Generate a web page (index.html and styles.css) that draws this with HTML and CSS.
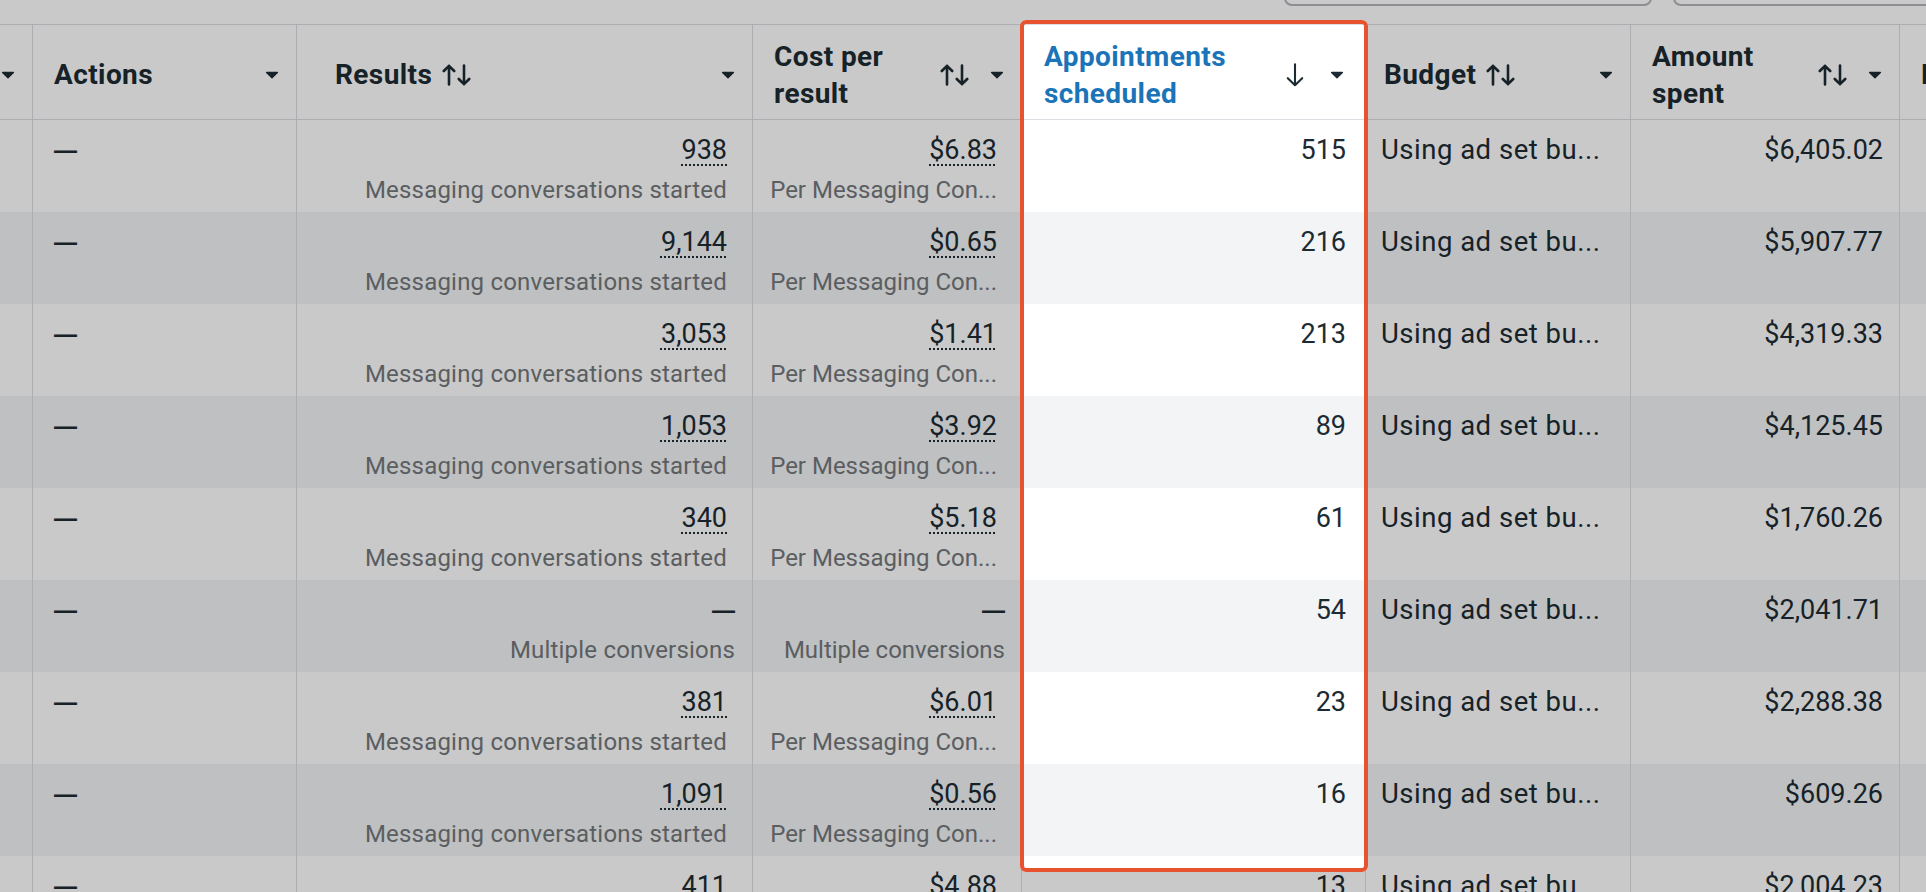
FILE: index.html
```html
<!DOCTYPE html>
<html lang="en">
<head>
<meta charset="utf-8">
<title>Ads table – Appointments scheduled</title>
<link rel="stylesheet" href="styles.css">
</head>
<body>
<div class="page">
  <div class="toolbar">
    <div class="btn btn-a"></div>
    <div class="btn btn-b"></div>
  </div>

  <div class="table">
    <div class="thead">
      <div class="th th-edge">
        <svg class="caret" width="14" height="8" viewBox="0 0 14 8"><path d="M1.6 0.8h10.8a.7.7 0 0 1 .5 1.2L7.5 7.3a.7.7 0 0 1-1 0L1.1 2a.7.7 0 0 1 .5-1.2z"/></svg>
      </div>
      <div class="th th-act">
        <div class="th-title">Actions</div>
        <svg class="caret" width="14" height="8" viewBox="0 0 14 8"><path d="M1.6 0.8h10.8a.7.7 0 0 1 .5 1.2L7.5 7.3a.7.7 0 0 1-1 0L1.1 2a.7.7 0 0 1 .5-1.2z"/></svg>
      </div>
      <div class="th th-res">
        <div class="th-title">Results</div>
        <svg class="sort" width="29" height="22" viewBox="0 0 29 22"><path d="M7 20.5V1.8M1.8 7 7 1.8 12.2 7M22 1.5v18.7M16.8 15 22 20.2 27.2 15"/></svg>
        <svg class="caret" width="14" height="8" viewBox="0 0 14 8"><path d="M1.6 0.8h10.8a.7.7 0 0 1 .5 1.2L7.5 7.3a.7.7 0 0 1-1 0L1.1 2a.7.7 0 0 1 .5-1.2z"/></svg>
      </div>
      <div class="th th-cost">
        <div class="th-title">Cost per result</div>
        <svg class="sort" width="29" height="22" viewBox="0 0 29 22"><path d="M7 20.5V1.8M1.8 7 7 1.8 12.2 7M22 1.5v18.7M16.8 15 22 20.2 27.2 15"/></svg>
        <svg class="caret" width="14" height="8" viewBox="0 0 14 8"><path d="M1.6 0.8h10.8a.7.7 0 0 1 .5 1.2L7.5 7.3a.7.7 0 0 1-1 0L1.1 2a.7.7 0 0 1 .5-1.2z"/></svg>
      </div>
      <div class="th th-appt">
        <div class="th-title th-title--active">Appointments scheduled</div>
        <svg class="sort sort--down" width="18" height="24" viewBox="0 0 18 24"><path d="M9 1.2v21M1.8 15.2 9 22.2l7.2-7"/></svg>
        <svg class="caret" width="14" height="8" viewBox="0 0 14 8"><path d="M1.6 0.8h10.8a.7.7 0 0 1 .5 1.2L7.5 7.3a.7.7 0 0 1-1 0L1.1 2a.7.7 0 0 1 .5-1.2z"/></svg>
      </div>
      <div class="th th-bud">
        <div class="th-title">Budget</div>
        <svg class="sort" width="29" height="22" viewBox="0 0 29 22"><path d="M7 20.5V1.8M1.8 7 7 1.8 12.2 7M22 1.5v18.7M16.8 15 22 20.2 27.2 15"/></svg>
        <svg class="caret" width="14" height="8" viewBox="0 0 14 8"><path d="M1.6 0.8h10.8a.7.7 0 0 1 .5 1.2L7.5 7.3a.7.7 0 0 1-1 0L1.1 2a.7.7 0 0 1 .5-1.2z"/></svg>
      </div>
      <div class="th th-amt">
        <div class="th-title">Amount spent</div>
        <svg class="sort" width="29" height="22" viewBox="0 0 29 22"><path d="M7 20.5V1.8M1.8 7 7 1.8 12.2 7M22 1.5v18.7M16.8 15 22 20.2 27.2 15"/></svg>
        <svg class="caret" width="14" height="8" viewBox="0 0 14 8"><path d="M1.6 0.8h10.8a.7.7 0 0 1 .5 1.2L7.5 7.3a.7.7 0 0 1-1 0L1.1 2a.7.7 0 0 1 .5-1.2z"/></svg>
      </div>
      <div class="th th-more">
        <div class="th-title">Ends</div>
      </div>
    </div>

    <div class="tr">
      <div class="td td-edge"></div>
      <div class="td td-act"><span class="num dash">—</span></div>
      <div class="td td-res"><span class="num link">938</span><span class="sub">Messaging conversations started</span></div>
      <div class="td td-cost"><span class="num link">$6.83</span><span class="sub">Per Messaging Con...</span></div>
      <div class="td td-appt"><span class="num">515</span></div>
      <div class="td td-bud"><span class="num text">Using ad set bu...</span></div>
      <div class="td td-amt"><span class="num">$6,405.02</span></div>
      <div class="td td-more"></div>
    </div>

    <div class="tr tr--alt">
      <div class="td td-edge"></div>
      <div class="td td-act"><span class="num dash">—</span></div>
      <div class="td td-res"><span class="num link">9,144</span><span class="sub">Messaging conversations started</span></div>
      <div class="td td-cost"><span class="num link">$0.65</span><span class="sub">Per Messaging Con...</span></div>
      <div class="td td-appt"><span class="num">216</span></div>
      <div class="td td-bud"><span class="num text">Using ad set bu...</span></div>
      <div class="td td-amt"><span class="num">$5,907.77</span></div>
      <div class="td td-more"></div>
    </div>

    <div class="tr">
      <div class="td td-edge"></div>
      <div class="td td-act"><span class="num dash">—</span></div>
      <div class="td td-res"><span class="num link">3,053</span><span class="sub">Messaging conversations started</span></div>
      <div class="td td-cost"><span class="num link">$1.41</span><span class="sub">Per Messaging Con...</span></div>
      <div class="td td-appt"><span class="num">213</span></div>
      <div class="td td-bud"><span class="num text">Using ad set bu...</span></div>
      <div class="td td-amt"><span class="num">$4,319.33</span></div>
      <div class="td td-more"></div>
    </div>

    <div class="tr tr--alt">
      <div class="td td-edge"></div>
      <div class="td td-act"><span class="num dash">—</span></div>
      <div class="td td-res"><span class="num link">1,053</span><span class="sub">Messaging conversations started</span></div>
      <div class="td td-cost"><span class="num link">$3.92</span><span class="sub">Per Messaging Con...</span></div>
      <div class="td td-appt"><span class="num">89</span></div>
      <div class="td td-bud"><span class="num text">Using ad set bu...</span></div>
      <div class="td td-amt"><span class="num">$4,125.45</span></div>
      <div class="td td-more"></div>
    </div>

    <div class="tr">
      <div class="td td-edge"></div>
      <div class="td td-act"><span class="num dash">—</span></div>
      <div class="td td-res"><span class="num link">340</span><span class="sub">Messaging conversations started</span></div>
      <div class="td td-cost"><span class="num link">$5.18</span><span class="sub">Per Messaging Con...</span></div>
      <div class="td td-appt"><span class="num">61</span></div>
      <div class="td td-bud"><span class="num text">Using ad set bu...</span></div>
      <div class="td td-amt"><span class="num">$1,760.26</span></div>
      <div class="td td-more"></div>
    </div>

    <div class="tr tr--alt">
      <div class="td td-edge"></div>
      <div class="td td-act"><span class="num dash">—</span></div>
      <div class="td td-res td--plain"><span class="num dash">—</span><span class="sub">Multiple conversions</span></div>
      <div class="td td-cost td--plain"><span class="num dash">—</span><span class="sub">Multiple conversions</span></div>
      <div class="td td-appt"><span class="num">54</span></div>
      <div class="td td-bud"><span class="num text">Using ad set bu...</span></div>
      <div class="td td-amt"><span class="num">$2,041.71</span></div>
      <div class="td td-more"></div>
    </div>

    <div class="tr">
      <div class="td td-edge"></div>
      <div class="td td-act"><span class="num dash">—</span></div>
      <div class="td td-res"><span class="num link">381</span><span class="sub">Messaging conversations started</span></div>
      <div class="td td-cost"><span class="num link">$6.01</span><span class="sub">Per Messaging Con...</span></div>
      <div class="td td-appt"><span class="num">23</span></div>
      <div class="td td-bud"><span class="num text">Using ad set bu...</span></div>
      <div class="td td-amt"><span class="num">$2,288.38</span></div>
      <div class="td td-more"></div>
    </div>

    <div class="tr tr--alt">
      <div class="td td-edge"></div>
      <div class="td td-act"><span class="num dash">—</span></div>
      <div class="td td-res"><span class="num link">1,091</span><span class="sub">Messaging conversations started</span></div>
      <div class="td td-cost"><span class="num link">$0.56</span><span class="sub">Per Messaging Con...</span></div>
      <div class="td td-appt"><span class="num">16</span></div>
      <div class="td td-bud"><span class="num text">Using ad set bu...</span></div>
      <div class="td td-amt"><span class="num">$609.26</span></div>
      <div class="td td-more"></div>
    </div>

    <div class="tr">
      <div class="td td-edge"></div>
      <div class="td td-act"><span class="num dash">—</span></div>
      <div class="td td-res"><span class="num link">411</span><span class="sub">Messaging conversations started</span></div>
      <div class="td td-cost"><span class="num link">$4.88</span><span class="sub">Per Messaging Con...</span></div>
      <div class="td td-appt"><span class="num">13</span></div>
      <div class="td td-bud"><span class="num text">Using ad set bu...</span></div>
      <div class="td td-amt"><span class="num">$2,004.23</span></div>
      <div class="td td-more"></div>
    </div>
  </div>

  <div class="spotlight" aria-hidden="true"></div>
</div>
</body>
</html>
```

FILE: styles.css
```css
html, body {
  margin: 0;
  padding: 0;
}

body {
  width: 1926px;
  height: 892px;
  overflow: hidden;
  background: #ffffff;
  font-family: Roboto, "Liberation Sans", sans-serif;
  color: #1c2b33;
}

.page {
  position: relative;
  width: 2100px;
}

/* top toolbar (only the bottoms of two buttons are visible) */
.toolbar {
  width: 1926px;
  height: 24px;
  box-sizing: border-box;
  padding-bottom: 18px;
  display: flex;
  justify-content: flex-end;
  align-items: flex-end;
  gap: 21px;
  overflow: hidden;
}

.btn {
  flex: none;
  height: 40px;
  box-sizing: border-box;
  border: 2px solid #b2b5ba;
  border-radius: 8px;
  background: #ffffff;
}

.btn-a { width: 368px; }
.btn-b { width: 273px; margin-right: -20px; }

/* table */
.table {
  --cols: 33px 264px 456px 269px 344px 265px 269px 200px;
  width: 2100px;
}

.thead,
.tr {
  display: grid;
  grid-template-columns: var(--cols);
}

.thead {
  height: 96px;
  box-sizing: border-box;
  border-top: 1px solid #dadde1;
  border-bottom: 1px solid #dadde1;
  background: #ffffff;
}

.tr {
  height: 92px;
  background: #ffffff;
}

.tr--alt {
  background: #f2f4f5;
}

.th,
.td {
  box-sizing: border-box;
  border-right: 1px solid #dadde1;
  min-width: 0;
}

/* header cells */
.th {
  display: flex;
  align-items: center;
  padding: 5px 17px 0 21px;
}

.th-title {
  flex: 0 1 auto;
  min-width: 0;
  font-size: 28px;
  line-height: 37px;
  font-weight: 700;
  letter-spacing: 0.4px;
  color: #1c2b33;
}

.th-title--active {
  color: #1b74b8;
}

.sort {
  flex: none;
  margin: 0 21px 0 8px;
  fill: none;
  stroke: #1c2b33;
  stroke-width: 2.6;
  stroke-linecap: round;
  stroke-linejoin: round;
}

.sort--down {
  margin-right: 26px;
  stroke-width: 2.1;
}

.caret {
  flex: none;
  margin-left: auto;
  fill: #1c2b33;
}

.th-edge { padding-left: 0; }
.th-res { padding-left: 38px; }
.th-res .sort { margin-left: 10px; }
.th-appt { padding-left: 22px; padding-right: 21px; }
.th-bud { padding-left: 18px; }
.th-bud .sort { margin-left: 10px; }
.th-more { border-right: none; }

/* body cells */
.td {
  display: flex;
  flex-direction: column;
  padding-top: 11px;
}

.num {
  font-size: 27px;
  line-height: 38px;
  white-space: nowrap;
}

.num.text {
  font-size: 27.5px;
  letter-spacing: 0.5px;
}

.dash {
  font-family: "Liberation Sans", Roboto, sans-serif;
  font-size: 23px;
  font-weight: 700;
}

.sub {
  margin-top: 4px;
  font-size: 24px;
  line-height: 34px;
  letter-spacing: 0.2px;
  color: #74787c;
  white-space: nowrap;
  overflow: hidden;
  text-overflow: ellipsis;
}

.td-cost .sub {
  letter-spacing: 0;
}

.link {
  text-decoration-line: underline;
  text-decoration-style: dotted;
  text-decoration-thickness: 2px;
  text-underline-offset: 5px;
}

.td-act { padding-left: 21px; }

.td-res,
.td-cost,
.td-appt,
.td-amt {
  align-items: flex-end;
}

.td-res { padding-right: 25px; }
.td-cost { padding-right: 24px; padding-left: 14px; }
.td--plain { padding-right: 17px; }
.td-cost.td--plain { padding-right: 16px; }
.td-appt { padding-right: 19px; }
.td-bud { padding-left: 15px; }
.td-amt { padding-right: 16px; }
.td-more { border-right: none; }

/* highlighted column: spotlight over the dimmed table */
.spotlight {
  position: absolute;
  left: 1020px;
  top: 20px;
  width: 348px;
  height: 852px;
  box-sizing: border-box;
  border: 4px solid #e8532f;
  border-radius: 6px;
  box-shadow: 0 0 0 3000px rgba(0, 0, 0, 0.21);
  pointer-events: none;
}
```
